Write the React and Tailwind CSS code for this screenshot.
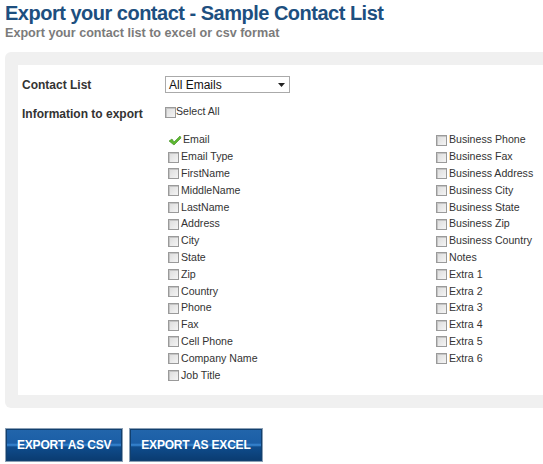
import React from 'react';

const leftFields = ['Email Type', 'FirstName', 'MiddleName', 'LastName', 'Address', 'City', 'State', 'Zip', 'Country', 'Phone', 'Fax', 'Cell Phone', 'Company Name', 'Job Title'];
const rightFields = ['Business Phone', 'Business Fax', 'Business Address', 'Business City', 'Business State', 'Business Zip', 'Business Country', 'Notes', 'Extra 1', 'Extra 2', 'Extra 3', 'Extra 4', 'Extra 5', 'Extra 6'];

function Box() {
  return (
    <span className="inline-block w-[11px] h-[11px] shrink-0 border border-[#9a9a9a] bg-gradient-to-br from-[#dcdcdc] to-[#f4f4f4] shadow-[inset_1px_1px_0_#c4c4c4]" />
  );
}

function Field({ label }) {
  return (
    <div className="flex items-center h-[16.8px] gap-[2px]">
      <Box />
      <span className="text-[10.6px] text-[#333]">{label}</span>
    </div>
  );
}

function Check() {
  return (
    <svg width="14" height="11" viewBox="0 0 14 11" className="shrink-0">
      <path d="M1 6 L4 4 L6 7 L12 1 L13 3 L6 10 Z" fill="#5cb82f" stroke="#3c8a1c" strokeWidth="0.6" strokeLinejoin="round" />
    </svg>
  );
}

export default function App() {
  return (
    <div className="w-[543px] h-[464px] overflow-hidden bg-white font-['Liberation_Sans',Arial,sans-serif]">
      <div className="pl-[5px] pt-[1px]">
        <h1 className="text-[20px] leading-[25px] font-bold text-[#1d4f7f] tracking-[-0.5px]">Export your contact - Sample Contact List</h1>
        <p className="text-[12.6px] leading-[14px] font-bold text-[#7b7b7b]">Export your contact list to excel or csv format</p>
      </div>

      <div className="ml-[5px] mt-[12px] w-[560px] rounded-[6px] bg-[#f0f0f0] p-[13px] pr-0">
        <div className="bg-white h-[330px] pl-[4px] pt-[10px]">
          <div className="flex items-center h-[19px]">
            <div className="w-[143px] text-[12px] font-bold text-[#333]">Contact List</div>
            <div className="w-[125px] h-[17px] border border-[#aaa] bg-white flex items-center justify-between pl-[3px] pr-[4px]">
              <span className="text-[12px] text-[#111]">All Emails</span>
              <svg width="7" height="4" viewBox="0 0 7 4"><path d="M0 0 H7 L3.5 4 Z" fill="#222" /></svg>
            </div>
          </div>
          <div className="flex mt-[9px]">
            <div className="w-[143px] text-[12px] font-bold text-[#333] pt-[2px]">Information to export</div>
            <div>
              <div className="flex items-center h-[14px] mt-[2px]">
                <Box />
                <span className="text-[10.6px] text-[#333]">Select All</span>
              </div>
              <div className="flex pl-[3px] mt-[13px]">
                <div className="w-[268px]">
                  <div className="flex items-center h-[16.8px] gap-[1px]">
                    <Check />
                    <span className="text-[10.6px] text-[#333]">Email</span>
                  </div>
                  {leftFields.map((f) => <Field key={f} label={f} />)}
                </div>
                <div>
                  {rightFields.map((f) => <Field key={f} label={f} />)}
                </div>
              </div>
            </div>
          </div>
        </div>
      </div>

      <div className="flex gap-[6px] ml-[5px] mt-[20px]">
        {['EXPORT AS CSV', 'EXPORT AS EXCEL'].map((t) => (
          <button key={t} className="h-[34px] px-[11px] border border-[#8a9fb5] bg-[linear-gradient(to_bottom,#2265ab_0%,#1b5ea6_44%,#3b8ad6_50%,#0f4c8c_56%,#0a3b70_100%)] text-white text-[12px] font-bold tracking-[-0.2px] shadow-[inset_0_0_0_1px_#12406f]">
            {t}
          </button>
        ))}
      </div>
    </div>
  );
}
